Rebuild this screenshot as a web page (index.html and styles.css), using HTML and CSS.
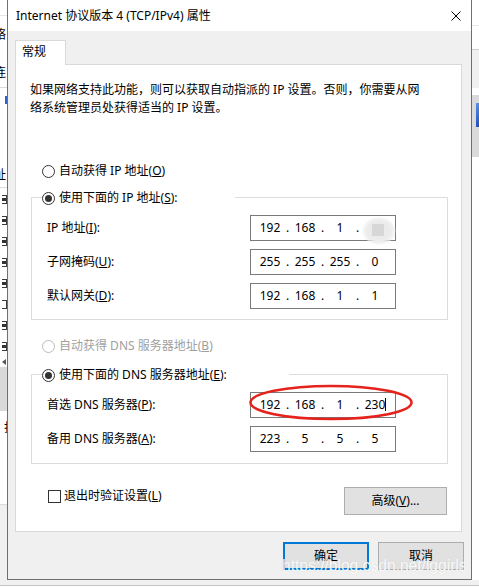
FILE: index.html
```html
<!DOCTYPE html>
<html lang="zh-CN">
<head>
<meta charset="utf-8">
<title>Internet 协议版本 4 (TCP/IPv4) 属性</title>
<link rel="stylesheet" href="styles.css">
</head>
<body>
<div class="screen">
  <div class="backdrop">
    <div class="strip strip-left">
      <div class="sp h15"></div>
      <div class="hline light"></div>
      <div class="sp h10"></div>
      <div class="frag h16"><span class="cut">络</span></div>
      <div class="sp h22"></div>
      <div class="frag h16"><span class="cut">连</span></div>
      <div class="sp h7"></div>
      <div class="hline"></div>
      <div class="sp h8"></div>
      <div class="bluebit"></div>
      <div class="sp h62"></div>
      <div class="frag h16"><span class="cut">址</span></div>
      <div class="sp h5"></div>
      <div class="hline"></div>
      <div class="sp h7"></div>
      <div class="cbi"><span class="cb on"></span></div>
      <div class="cbi"><span class="cb on"></span></div>
      <div class="cbi"><span class="cb on"></span></div>
      <div class="cbi"><span class="cb on"></span></div>
      <div class="cbi"><span class="cb on"></span></div>
      <div class="cbi"><span class="cb"></span></div>
      <div class="cbi"><span class="cb on"></span></div>
      <div class="cbi last"><span class="cb on"></span></div>
      <div class="arrowrow"><span class="tri"></span></div>
      <div class="greyband"></div>
      <div class="sp h9"></div>
      <div class="frag h14"><span class="cut2">打</span></div>
      <div class="sp h70"></div>
      <div class="hline"></div>
      <div class="greyfill"></div>
    </div>
    <div class="backdrop-mid"></div>
    <div class="strip strip-right">
      <div class="sp h25"></div>
      <div class="hline light"></div>
      <div class="sp h23"></div>
      <div class="hline mid"></div>
      <div class="band1"></div>
      <div class="sp h7"></div>
      <div class="band2"><span class="blueicon"></span></div>
    </div>
  </div>
  <div class="backdrop-bottom">
    <div class="bb1"></div>
    <div class="bb2"></div>
  </div>

  <div class="dialog">
    <div class="titlebar">
      <span class="title">Internet 协议版本 4 (TCP/IPv4) 属性</span>
      <svg class="close" viewBox="0 0 10 10" width="10" height="10"><path d="M0.5 0.5 L9.5 9.5 M9.5 0.5 L0.5 9.5" stroke="#000" stroke-width="1" fill="none"/></svg>
    </div>
    <div class="body">
      <div class="tab">常规</div>
      <div class="panel">
        <p class="desc">如果网络支持此功能，则可以获取自动指派的 IP 设置。否则，你需要从网<br>络系统管理员处获得适当的 IP 设置。</p>

        <div class="radio r1"><span class="dot"></span>自动获得 IP 地址(<u>O</u>)</div>

        <div class="group g1">
          <div class="legend"><span class="dot on"></span>使用下面的 IP 地址(<u>S</u>):</div>
          <div class="field">
            <span class="lbl">IP 地址(<u>I</u>):</span>
            <div class="ip"><span class="seg">192</span><span class="sep">.</span><span class="seg">168</span><span class="sep">.</span><span class="seg">1</span><span class="sep">.</span><span class="seg"></span><span class="blur"></span></div>
          </div>
          <div class="field">
            <span class="lbl">子网掩码(<u>U</u>):</span>
            <div class="ip"><span class="seg">255</span><span class="sep">.</span><span class="seg">255</span><span class="sep">.</span><span class="seg">255</span><span class="sep">.</span><span class="seg">0</span></div>
          </div>
          <div class="field">
            <span class="lbl">默认网关(<u>D</u>):</span>
            <div class="ip"><span class="seg">192</span><span class="sep">.</span><span class="seg">168</span><span class="sep">.</span><span class="seg">1</span><span class="sep">.</span><span class="seg">1</span></div>
          </div>
        </div>

        <div class="radio r3 disabled"><span class="dot"></span>自动获得 DNS 服务器地址(<u>B</u>)</div>

        <div class="group g2">
          <div class="legend"><span class="dot on"></span>使用下面的 DNS 服务器地址(<u>E</u>):</div>
          <div class="field">
            <span class="lbl">首选 DNS 服务器(<u>P</u>):</span>
            <div class="ip"><span class="seg">192</span><span class="sep">.</span><span class="seg">168</span><span class="sep">.</span><span class="seg">1</span><span class="sep">.</span><span class="seg">230<i class="caret"></i></span>
              <svg class="mark" viewBox="0 0 164 37" width="164" height="37"><ellipse cx="82" cy="18.5" rx="80.5" ry="16.5" fill="none" stroke="#e5231c" stroke-width="2.6"/></svg>
            </div>
          </div>
          <div class="field">
            <span class="lbl">备用 DNS 服务器(<u>A</u>):</span>
            <div class="ip"><span class="seg">223</span><span class="sep">.</span><span class="seg">5</span><span class="sep">.</span><span class="seg">5</span><span class="sep">.</span><span class="seg">5</span></div>
          </div>
        </div>

        <div class="footer-row">
          <div class="check"><span class="box"></span>退出时验证设置(<u>L</u>)</div>
          <div class="btn adv">高级(<u>V</u>)...</div>
        </div>
      </div>
      <div class="actions">
        <div class="btn ok">确定</div>
        <div class="btn">取消</div>
      </div>
    </div>
  </div>

  <div class="watermark">https://blog.csdn.net/lggirls</div>
</div>
</body>
</html>
```

FILE: styles.css
```css
body {
  margin: 0;
  font-family: "Noto Sans", "Noto Sans CJK SC", sans-serif;
  font-size: 12px;
  color: #000;
}

.screen {
  position: relative;
  width: 479px;
  height: 588px;
  overflow: hidden;
  background: #fff;
  display: flex;
  flex-direction: column;
}

/* ---------- backdrop window ---------- */
.backdrop {
  height: 580px;
  display: flex;
  flex: none;
}
.backdrop-mid { flex: 1; background: #fff; }
.strip {
  display: flex;
  flex-direction: column;
  overflow: hidden;
  background: #fff;
}
.strip-left { width: 7px; }
.strip-right { width: 8px; }
.sp { flex: none; }
.h5 { height: 5px; } .h7 { height: 7px; } .h8 { height: 8px; } .h9 { height: 9px; }
.h10 { height: 10px; } .h15 { height: 15px; } .h22 { height: 22px; } .h23 { height: 23px; }
.h25 { height: 25px; } .h62 { height: 62px; } .h70 { height: 70px; }
.hline { height: 1px; background: #dcdcdc; flex: none; }
.hline.light { background: #e6e6e6; }
.hline.mid { background: #cfcfcf; }
.frag { flex: none; line-height: 16px; white-space: nowrap; font-family: "Noto Sans CJK SC", sans-serif; }
.h16 { height: 16px; }
.h14 { height: 14px; line-height: 14px; }
.cut { display: inline-block; margin-left: -6px; }
.cut2 { display: inline-block; margin-left: 4px; }
.bluebit { height: 8px; width: 2px; margin-left: 5px; background: #2d64c8; flex: none; }
.cbi { height: 21px; flex: none; }
.cbi.last { height: 14px; }
.cb {
  display: block;
  width: 4px;
  height: 7px;
  margin-left: 2px;
  border: 1px solid #3c3c3c;
  border-left: none;
  background: #fff;
}
.cb.on { background: linear-gradient(#fff 2px, #333 2px, #333 5px, #fff 5px); }
.arrowrow { height: 11px; flex: none; display: flex; align-items: center; padding-left: 2px; }
.tri {
  width: 0; height: 0;
  border-top: 3px solid transparent;
  border-bottom: 3px solid transparent;
  border-right: 4px solid #555;
}
.greyband { height: 44px; background: #d9d9d9; flex: none; }
.greyfill { flex: 1; background: #f0f0f0; }
.band1 { height: 38px; background: #f0f0f0; flex: none; }
.band2 { height: 62px; background: #dadada; flex: none; display: flex; justify-content: flex-end; padding-top: 8px; box-sizing: border-box; }
.blueicon { width: 3px; height: 24px; background: linear-gradient(#5b8fe0, #1f52b8); }

.backdrop-bottom { flex: 1; display: flex; flex-direction: column; }
.bb1 { height: 5px; background: #f0f0f0; }
.bb2 { height: 1px; background: #c4c4c4; }

/* ---------- dialog ---------- */
.dialog {
  position: absolute;
  left: 7px;
  top: 0;
  width: 465px;
  height: 580px;
  box-sizing: border-box;
  border: 1px solid #707070;
  border-top: none;
  background: #f0f0f0;
  display: flex;
  flex-direction: column;
}
.titlebar {
  height: 31px;
  flex: none;
  background: #fff;
  display: flex;
  align-items: center;
  justify-content: space-between;
  padding: 0 10px 0 8px;
}
.title { line-height: 18px; padding-top: 1px; }
.close { display: block; }

.body {
  flex: 1;
  padding: 9px 7px 0 7px;
  display: flex;
  flex-direction: column;
}
.tab {
  width: 51px;
  height: 25px;
  box-sizing: border-box;
  border: 1px solid #d9d9d9;
  border-bottom: none;
  background: #fff;
  padding: 2px 0 0 6px;
  line-height: 18px;
  margin-bottom: -1px;
  position: relative;
  z-index: 1;
}
.panel {
  width: 447px;
  height: 468px;
  box-sizing: border-box;
  border: 1px solid #d9d9d9;
  background: #fff;
  display: flex;
  flex-direction: column;
}
.desc {
  margin: 16px 0 0 14px;
  line-height: 18px;
}
.radio {
  display: flex;
  align-items: center;
  height: 18px;
  line-height: 18px;
  margin-left: 26px;
}
.r1 { margin-top: 45px; }
.r3 { margin-top: 17px; }
.radio.disabled { color: #a0a0a0; }
.radio.disabled .dot { border-color: #bcbcbc; }
.dot {
  width: 13px;
  height: 13px;
  box-sizing: border-box;
  border: 1px solid #333;
  border-radius: 50%;
  background: #fff;
  margin-right: 4px;
  display: flex;
  align-items: center;
  justify-content: center;
  flex: none;
}
.dot.on::after {
  content: "";
  width: 7px;
  height: 7px;
  border-radius: 50%;
  background: #333;
}

.group {
  margin: 17px 13px 0 15px;
  border: 1px solid #dcdcdc;
  padding-bottom: 10px;
  display: flex;
  flex-direction: column;
  gap: 8px;
}
.g2 { margin-top: 19px; padding-bottom: 11px; }
.legend {
  margin: -9px 0 0 10px;
  width: 193px;
  height: 18px;
  line-height: 18px;
  background: #fff;
  display: flex;
  align-items: center;
}
.g2 .legend { width: 247px; }
.field {
  display: flex;
  align-items: center;
  height: 26px;
}
.lbl {
  width: 203px;
  margin-left: 15px;
  flex: none;
  line-height: 18px;
}
.ip {
  position: relative;
  width: 146px;
  height: 26px;
  box-sizing: border-box;
  border: 1px solid #7a7a7a;
  padding-left: 5px;
  display: flex;
  align-items: center;
  line-height: 18px;
  background: #fff;
}
.seg { width: 28px; text-align: center; flex: none; white-space: nowrap; }
.sep { width: 7px; text-align: center; flex: none; }
.caret {
  display: inline-block;
  width: 1px;
  height: 13px;
  background: #000;
  vertical-align: -2px;
  margin-right: -1px;
}
.blur {
  position: absolute;
  left: 111px;
  top: 1px;
  width: 34px;
  height: 28px;
  border-radius: 50%;
  background: radial-gradient(ellipse at center, #e8e8e8 0%, #ececec 50%, rgba(238,238,238,0.6) 65%, rgba(240,240,240,0) 72%);
}
.blur::after {
  content: "";
  position: absolute;
  left: 10px;
  top: 7px;
  width: 12px;
  height: 12px;
  background: #d7d7d7;
}
.mark {
  position: absolute;
  left: -2px;
  top: -9px;
  overflow: visible;
}

.footer-row {
  display: flex;
  justify-content: space-between;
  align-items: flex-start;
  margin: 23px 14px 0 32px;
}
.check {
  display: flex;
  align-items: center;
  height: 18px;
  line-height: 18px;
}
.box {
  width: 13px;
  height: 13px;
  box-sizing: border-box;
  border: 1px solid #333;
  background: #fff;
  margin-right: 3px;
  flex: none;
}
.btn {
  height: 28px;
  box-sizing: border-box;
  border: 1px solid #adadad;
  background: #e1e1e1;
  display: flex;
  align-items: center;
  justify-content: center;
  line-height: 18px;
}
.adv { width: 103px; }
.actions {
  display: flex;
  justify-content: flex-end;
  gap: 9px;
  margin-top: 10px;
}
.actions .btn { width: 86px; }
.btn.ok { border: 2px solid #0078d7; }

.watermark {
  position: absolute;
  left: 282px;
  top: 557px;
  font-family: "Liberation Sans", Arial, sans-serif;
  font-size: 15.6px;
  line-height: 18px;
  color: rgba(255, 255, 255, 0.92);
  text-shadow: 0 0 1px rgba(120, 120, 120, 0.25);
  white-space: nowrap;
}
```
